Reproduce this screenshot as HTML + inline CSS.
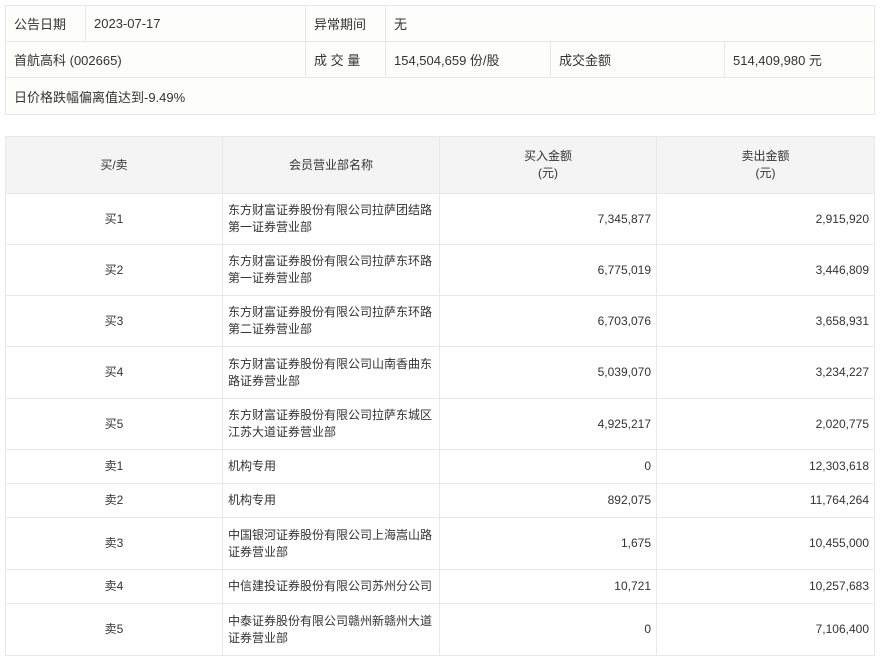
<!DOCTYPE html>
<html><head><meta charset="utf-8"><style>
body{margin:0;background:#fff;font-family:"Liberation Sans","Noto Sans CJK SC",sans-serif;color:#333;}
table{border-collapse:collapse;position:absolute;left:5px;table-layout:fixed;}
td{border:1px solid #e8e8e8;padding:0 8px;white-space:nowrap;}
#t1{top:5px;width:870px;background:#fdfdfb;font-size:13px;}
#t1 td{height:35px;}
#t2{top:136px;width:870px;font-size:12px;}
#t2 td{padding:0 5px;line-height:17px;}
#t2 .h td{background:#f4f4f4;height:56px;text-align:center;}
.c{text-align:center}.r{text-align:right}
</style></head><body>
<table id="t1">
<colgroup><col style="width:80px"><col style="width:220px"><col style="width:80px"><col style="width:165px"><col style="width:174px"><col></colgroup>
<tr><td>公告日期</td><td>2023-07-17</td><td>异常期间</td><td colspan="3">无</td></tr>
<tr><td colspan="2">首航高科 (002665)</td><td>成 交 量</td><td>154,504,659 份/股</td><td>成交金额</td><td>514,409,980 元</td></tr>
<tr><td colspan="6" style="height:36px">日价格跌幅偏离值达到-9.49%</td></tr>
</table>
<table id="t2">
<colgroup><col style="width:217px"><col style="width:217px"><col style="width:217px"><col></colgroup>
<tr class="h"><td>买/卖</td><td>会员营业部名称</td><td>买入金额<br>(元)</td><td>卖出金额<br>(元)</td></tr>
<tr style="height:51px"><td class="c">买1</td><td>东方财富证券股份有限公司拉萨团结路<br>第一证券营业部</td><td class="r">7,345,877</td><td class="r">2,915,920</td></tr>
<tr style="height:51px"><td class="c">买2</td><td>东方财富证券股份有限公司拉萨东环路<br>第一证券营业部</td><td class="r">6,775,019</td><td class="r">3,446,809</td></tr>
<tr style="height:51px"><td class="c">买3</td><td>东方财富证券股份有限公司拉萨东环路<br>第二证券营业部</td><td class="r">6,703,076</td><td class="r">3,658,931</td></tr>
<tr style="height:52px"><td class="c">买4</td><td>东方财富证券股份有限公司山南香曲东<br>路证券营业部</td><td class="r">5,039,070</td><td class="r">3,234,227</td></tr>
<tr style="height:51px"><td class="c">买5</td><td>东方财富证券股份有限公司拉萨东城区<br>江苏大道证券营业部</td><td class="r">4,925,217</td><td class="r">2,020,775</td></tr>
<tr style="height:34px"><td class="c">卖1</td><td>机构专用</td><td class="r">0</td><td class="r">12,303,618</td></tr>
<tr style="height:34px"><td class="c">卖2</td><td>机构专用</td><td class="r">892,075</td><td class="r">11,764,264</td></tr>
<tr style="height:52px"><td class="c">卖3</td><td>中国银河证券股份有限公司上海嵩山路<br>证券营业部</td><td class="r">1,675</td><td class="r">10,455,000</td></tr>
<tr style="height:34px"><td class="c">卖4</td><td>中信建投证券股份有限公司苏州分公司</td><td class="r">10,721</td><td class="r">10,257,683</td></tr>
<tr style="height:52px"><td class="c">卖5</td><td>中泰证券股份有限公司赣州新赣州大道<br>证券营业部</td><td class="r">0</td><td class="r">7,106,400</td></tr>
</table>
</body></html>
